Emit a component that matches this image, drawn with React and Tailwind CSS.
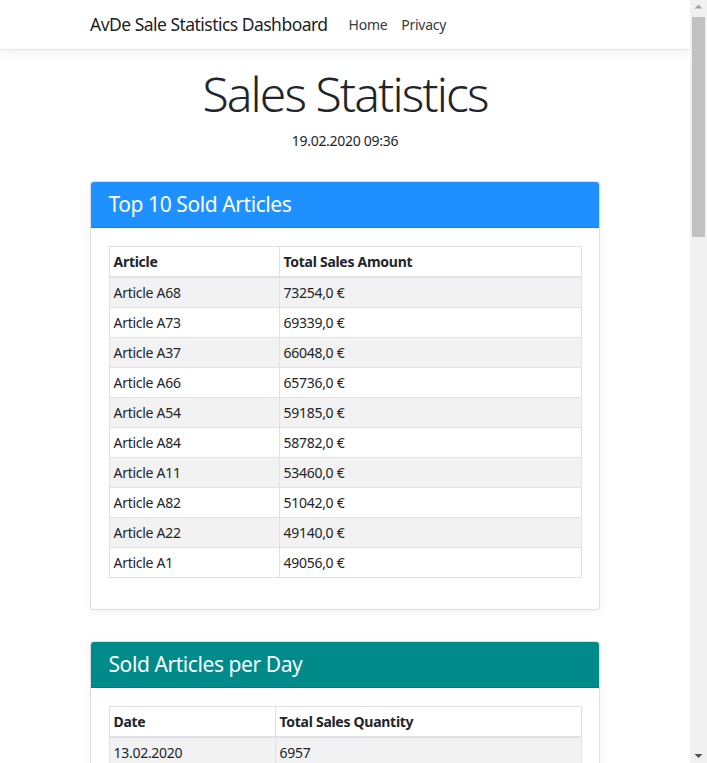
const TOP_ARTICLES = [
  ["Article A68", "73254,0 €"],
  ["Article A73", "69339,0 €"],
  ["Article A37", "66048,0 €"],
  ["Article A66", "65736,0 €"],
  ["Article A54", "59185,0 €"],
  ["Article A84", "58782,0 €"],
  ["Article A11", "53460,0 €"],
  ["Article A82", "51042,0 €"],
  ["Article A22", "49140,0 €"],
  ["Article A1", "49056,0 €"],
];

const PER_DAY = [["13.02.2020", "6957"]];

const FONT = { fontFamily: '"Noto Sans", "Open Sans", sans-serif' };

function StatTable({ head, rows, firstCol }) {
  return (
    <table className="w-full border-collapse border border-[#dee2e6] text-[14px] tracking-[-0.02em] text-[#212529]">
      <thead>
        <tr>
          {head.map((h, i) => (
            <th
              key={h}
              className={`border border-b-2 border-[#dee2e6] px-[4px] py-[4px] text-left font-bold leading-[21px] ${i === 0 ? firstCol : ""}`}
            >
              {h}
            </th>
          ))}
        </tr>
      </thead>
      <tbody>
        {rows.map((r, idx) => (
          <tr key={r[0]} className={idx % 2 === 0 ? "bg-[#f2f2f2]" : "bg-white"}>
            {r.map((c) => (
              <td key={c} className="border border-[#dee2e6] px-[4px] py-[4px] leading-[21px]">
                {c}
              </td>
            ))}
          </tr>
        ))}
      </tbody>
    </table>
  );
}

function Card({ title, color, children, className }) {
  return (
    <div
      className={`rounded-[4px] border border-black/[0.125] bg-white shadow-[0_2px_8px_rgba(0,0,0,0.06)] ${className}`}
    >
      <div className={`rounded-t-[3px] border-b border-black/[0.125] px-[17.5px] py-[10px] ${color}`}>
        <h4 className="text-[21px] leading-[25px] font-normal tracking-[-0.02em] text-white">{title}</h4>
      </div>
      <div className="px-[17.5px] pt-[17.5px] pb-[31.5px]">{children}</div>
    </div>
  );
}

function Scrollbar() {
  return (
    <div className="flex w-[17px] shrink-0 flex-col items-center bg-[#f1f1f1]">
      <svg width="17" height="17" viewBox="0 0 17 17" className="shrink-0">
        <path d="M4.5 8.5 L8.5 4.5 L12.5 8.5 Z" fill="#a3a3a3" />
      </svg>
      <div className="h-[220px] w-[13px] shrink-0 bg-[#c1c1c1]" />
      <div className="grow" />
      <svg width="17" height="17" viewBox="0 0 17 17" className="shrink-0">
        <path d="M4.5 8 L12.5 8 L8.5 12 Z" fill="#505050" />
      </svg>
    </div>
  );
}

export default function App() {
  return (
    <div className="flex h-[763px] w-full overflow-hidden bg-white" style={FONT}>
      <div className="w-[690px] shrink-0 overflow-hidden">
        <header className="border-b border-[#e5e5e5] bg-white shadow-[0_4px_10px_rgba(0,0,0,0.05)]">
          <nav className="mx-auto flex h-[49px] w-[510px] items-center">
            <span className="mr-[14px] text-[17.5px] tracking-[-0.03em] text-black/90">AvDe Sale Statistics Dashboard</span>
            <a className="px-[7px] text-[14px] tracking-[-0.02em] text-[#343a40]">Home</a>
            <a className="px-[7px] text-[14px] tracking-[-0.02em] text-[#343a40]">Privacy</a>
          </nav>
        </header>

        <main className="mx-auto w-[510px] pt-[14px]">
          <div className="text-center">
            <h1 className="text-[48px] leading-[59px] font-light tracking-[-0.04em] text-[#212529]">Sales Statistics</h1>
            <p className="mt-[7px] text-[14px] leading-[21px] tracking-[-0.02em] text-[#212529]">19.02.2020 09:36</p>
          </div>

          <Card title="Top 10 Sold Articles" color="bg-[#1e90ff]" className="mt-[30px]">
            <StatTable head={["Article", "Total Sales Amount"]} rows={TOP_ARTICLES} firstCol="w-[170px]" />
          </Card>

          <Card title="Sold Articles per Day" color="bg-[#008b8b]" className="mt-[31px]">
            <StatTable head={["Date", "Total Sales Quantity"]} rows={PER_DAY} firstCol="w-[166px]" />
          </Card>
        </main>
      </div>
      <Scrollbar />
    </div>
  );
}
